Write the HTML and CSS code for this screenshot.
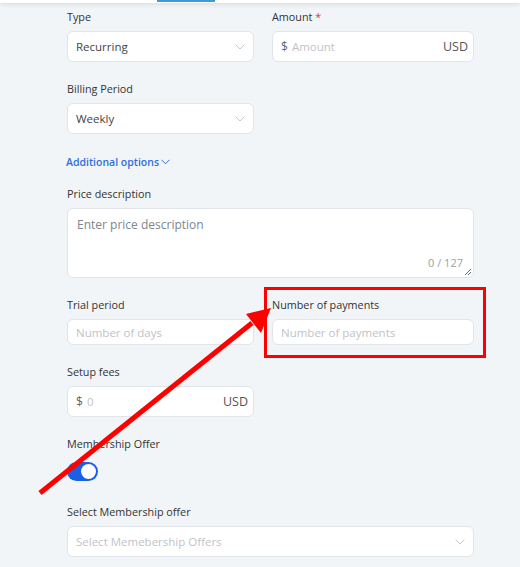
FILE: index.html
```html
<!DOCTYPE html>
<html>
<head>
<meta charset="utf-8">
<link rel="stylesheet" href="styles.css">
</head>
<body>
<div class="topbar"><div class="tab-indicator"></div></div>
<div class="form">
  <div class="row">
    <div class="field col-a">
      <div class="label">Type</div>
      <div class="input select"><span class="val">Recurring</span><svg class="chev" width="10" height="6" viewBox="0 0 10 6"><path d="M0.5 0.5 L5 5 L9.5 0.5" fill="none" stroke="#c4c8cc" stroke-width="1"/></svg></div>
    </div>
    <div class="field col-b">
      <div class="label">Amount <span class="req">*</span></div>
      <div class="input"><span class="cur">$</span><span class="ph">Amount</span><span class="suffix">USD</span></div>
    </div>
  </div>
  <div class="field col-a">
    <div class="label">Billing Period</div>
    <div class="input select"><span class="val">Weekly</span><svg class="chev" width="10" height="6" viewBox="0 0 10 6"><path d="M0.5 0.5 L5 5 L9.5 0.5" fill="none" stroke="#c4c8cc" stroke-width="1"/></svg></div>
  </div>
  <div class="more">Additional options<svg width="9" height="6" viewBox="0 0 9 6"><path d="M0.5 0.8 L4.5 4.8 L8.5 0.8" fill="none" stroke="#2f6ee0" stroke-width="1"/></svg></div>
  <div class="field">
    <div class="label">Price description</div>
    <div class="textarea"><span class="ph2">Enter price description</span><span class="count">0 / 127</span><svg class="grip" width="8" height="8" viewBox="0 0 8 8"><path d="M1 7 L7 1 M4 7 L7 4" stroke="#666" stroke-width="1"/></svg></div>
  </div>
  <div class="row">
    <div class="field col-a">
      <div class="label">Trial period</div>
      <div class="input short"><span class="ph">Number of days</span></div>
    </div>
    <div class="field col-b">
      <div class="label">Number of payments</div>
      <div class="input short"><span class="ph">Number of payments</span></div>
    </div>
  </div>
  <div class="field col-a">
    <div class="label">Setup fees</div>
    <div class="input"><span class="cur">$</span><span class="ph">0</span><span class="suffix">USD</span></div>
  </div>
  <div class="field">
    <div class="label">Membership Offer</div>
    <div class="toggle"><div class="knob"></div></div>
  </div>
  <div class="field last">
    <div class="label">Select Membership offer</div>
    <div class="input select"><span class="ph">Select Memebership Offers</span><svg class="chev" width="10" height="6" viewBox="0 0 10 6"><path d="M0.5 0.5 L5 5 L9.5 0.5" fill="none" stroke="#c4c8cc" stroke-width="1"/></svg></div>
  </div>
</div>
<svg class="annot" width="520" height="567" viewBox="0 0 520 567">
  <rect x="265.5" y="288.5" width="219" height="68" fill="none" stroke="#ff0000" stroke-width="3"/>
  <line x1="40" y1="493" x2="252" y2="323" stroke="#ff0000" stroke-width="5"/>
  <polygon points="271,308 246,314 261,333" fill="#ff0000"/>
</svg>
</body>
</html>
```

FILE: styles.css
```css
html, body {
  margin: 0;
  padding: 0;
}
body {
  width: 520px;
  height: 567px;
  overflow: hidden;
  background: #f1f5f8;
  font-family: "Open Sans", "Noto Sans", sans-serif;
  color: #333;
  position: relative;
}
.topbar {
  height: 3px;
  background: #fff;
  box-shadow: 0 1px 5px rgba(0,0,0,0.15);
  position: relative;
}
.tab-indicator {
  position: absolute;
  left: 157px;
  top: 0;
  width: 58px;
  height: 2px;
  background: #3d9ad8;
}
.form {
  padding: 6px 0 0 67px;
  width: 407px;
  display: flex;
  flex-direction: column;
}
.row {
  display: flex;
  gap: 18px;
}
.col-a { width: 187px; }
.col-b { width: 202px; }
.field {
  display: flex;
  flex-direction: column;
  margin-bottom: 19px;
}
.label {
  font-size: 10.8px;
  line-height: 16px;
  height: 16px;
  margin-bottom: 6px;
  color: #333;
}
.req { color: #e53935; }
.input {
  box-sizing: border-box;
  height: 31px;
  background: #fff;
  border: 1px solid #e1e4e8;
  border-radius: 6px;
  display: flex;
  align-items: center;
  padding: 0 5px 0 8px;
  font-size: 11.5px;
}
.input.short { height: 26px; }
.val { color: #444; flex: 1; }
.ph { color: #bfc3c7; flex: 1; }
.cur { color: #666; margin-right: 4px; font-size: 12px; }
.suffix { color: #555; font-size: 12.5px; }
.chev { flex: none; margin-right: 3px; }
.more {
  font-size: 10.5px;
  line-height: 16px;
  font-weight: 600;
  color: #2f6ee0;
  margin: 1px 0 16px -1px;
  display: flex;
  align-items: center;
  gap: 2px;
}
.textarea {
  box-sizing: border-box;
  height: 70px;
  background: #fff;
  border: 1px solid #e1e4e8;
  border-radius: 6px;
  position: relative;
  padding: 7px 9px;
  font-size: 12px;
}
.ph2 { color: #80868e; }
.count {
  position: absolute;
  right: 10px;
  bottom: 7px;
  font-size: 11px;
  color: #9aa0a6;
}
.grip {
  position: absolute;
  right: 1px;
  bottom: 1px;
}
.toggle {
  width: 31px;
  height: 19px;
  border-radius: 10px;
  background: #1b5fe5;
  position: relative;
  margin-top: 4px;
}
.knob {
  position: absolute;
  right: 2px;
  top: 2px;
  width: 15px;
  height: 15px;
  border-radius: 50%;
  background: #fff;
}
.last { margin-top: 4px; }
.annot {
  position: absolute;
  left: 0;
  top: 0;
  pointer-events: none;
}
```
